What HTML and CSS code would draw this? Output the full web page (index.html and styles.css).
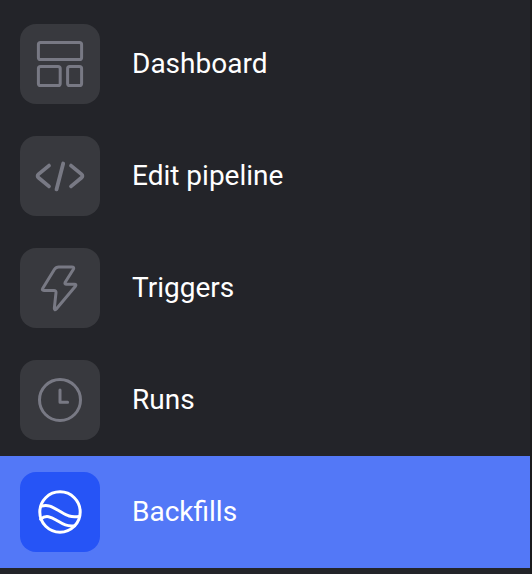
FILE: index.html
```html
<!DOCTYPE html>
<html lang="en">
<head>
<meta charset="utf-8">
<title>Pipeline</title>
<link rel="stylesheet" href="styles.css">
</head>
<body>
<nav class="sidebar">
  <a class="item">
    <span class="tile"><svg viewBox="0 0 80 80"><rect x="18.4" y="18.4" width="43.2" height="17.2" rx="2.2"/><rect x="18.4" y="42.4" width="21.8" height="19.2" rx="2.2"/><rect x="47.6" y="42.4" width="14" height="19.2" rx="2.2"/></svg></span>
    <span class="label">Dashboard</span>
  </a>
  <a class="item">
    <span class="tile"><svg class="bold" viewBox="0 0 80 80"><path d="M29 29.6 18.6 38.1Q16.6 40 18.6 41.8L29 50.4M43.2 27.5 36.5 53.4M51 29.6 61.4 38.1Q63.4 40 61.4 41.8L51 50.4"/></svg></span>
    <span class="label">Edit pipeline</span>
  </a>
  <a class="item">
    <span class="tile"><svg viewBox="0 0 80 80"><path d="M38.7 19H51.8Q54.6 19 53.4 21.3L45.2 34.2Q44.2 36.2 46.5 36.2H54.3Q56.8 36.2 55.4 38.3L36.3 61Q34.4 62.8 34.3 60.3L36 44.6Q36.1 42.5 34 42.5H24Q21.4 42.5 22.8 40.2L34.5 21.3Q36 19 38.7 19Z"/></svg></span>
    <span class="label">Triggers</span>
  </a>
  <a class="item">
    <span class="tile"><svg viewBox="0 0 80 80"><circle cx="40" cy="40" r="20.5"/><path d="M40 30V42.2H47.6"/></svg></span>
    <span class="label">Runs</span>
  </a>
  <a class="item active">
    <span class="tile"><svg viewBox="0 0 80 80"><circle cx="40" cy="40" r="20.2"/><path d="M21.5 34.2C28 31.8 33 35.3 39.7 39.2C46.5 43.2 50 45.8 59 44.4M20.7 47.2C26 42.5 31 45 36.5 48.2C42 51.5 46 54.8 54.8 53.7"/></svg></span>
    <span class="label">Backfills</span>
  </a>
</nav>
</body>
</html>
```
FILE: styles.css
```css
* { box-sizing: border-box; }
body {
  margin: 0;
  height: 574px;
  overflow: hidden;
  background: #232429;
  font-family: Roboto, "Liberation Sans", sans-serif;
}
.sidebar {
  height: 574px;
  padding-top: 8px;
  border-right: 2px solid #1b1b1d;
}
.item {
  display: flex;
  align-items: center;
  gap: 32px;
  height: 112px;
  padding: 0 20px;
  color: #fff;
}
.tile {
  flex: none;
  width: 80px;
  height: 80px;
  border-radius: 16px;
  background: #38393e;
  color: #787984;
}
.active { background: #5378f7; }
.active .tile {
  background: #2654f6;
  color: #fff;
}
.label {
  font-size: 28px;
  line-height: 40px;
  white-space: nowrap;
}
svg {
  display: block;
  width: 80px;
  height: 80px;
  fill: none;
  stroke: currentColor;
  stroke-width: 3;
  stroke-linecap: round;
  stroke-linejoin: round;
}
.bold { stroke-width: 3.8; }
```
